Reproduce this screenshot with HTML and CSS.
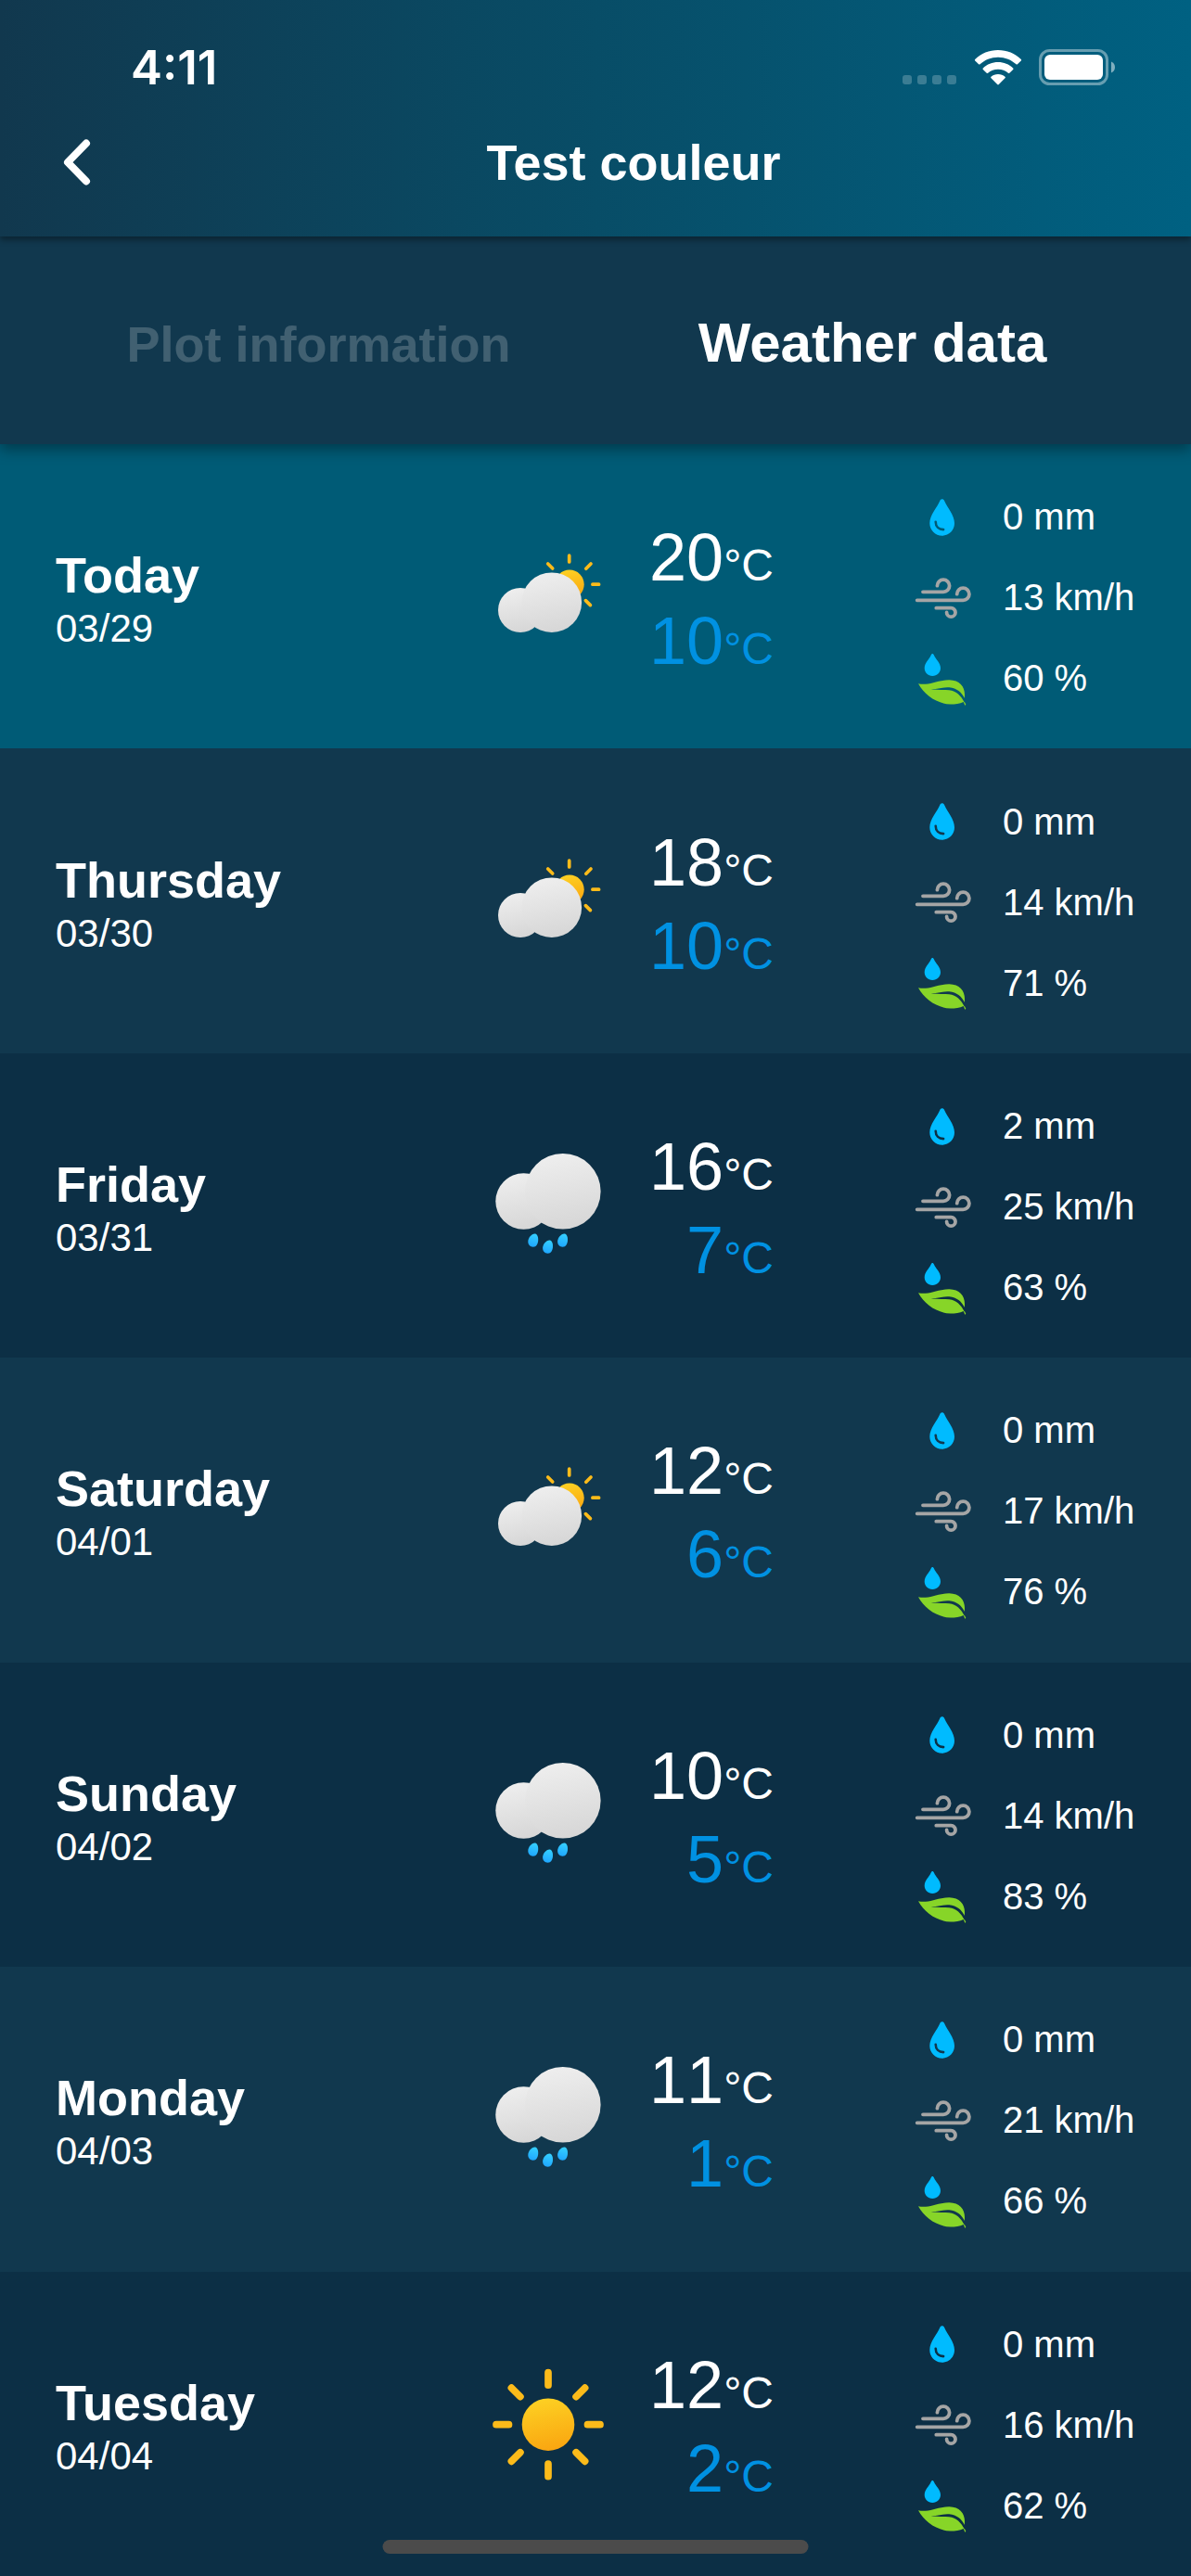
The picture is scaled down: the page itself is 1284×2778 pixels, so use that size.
FILE: index.html
```html
<!DOCTYPE html>
<html lang="en">
<head>
    <meta charset="UTF-8">
    <meta name="viewport" content="width=device-width, initial-scale=1.0">
    <title>Test couleur</title>
    <link rel="stylesheet" href="styles.css">
</head>
<body>
    <!-- Shared icons -->
    <svg class="sprite" aria-hidden="true">
        <defs>
            <linearGradient id="cloud-fill" x1="0.4" y1="0" x2="0.6" y2="1">
                <stop offset="0" stop-color="#eeeeee"/>
                <stop offset="1" stop-color="#d6d6d6"/>
            </linearGradient>
            <linearGradient id="sun-fill" x1="0.4" y1="0" x2="0.6" y2="1">
                <stop offset="0" stop-color="#fdd023"/>
                <stop offset="1" stop-color="#faa510"/>
            </linearGradient>
            <linearGradient id="rain-fill" x1="0.6" y1="0" x2="0.4" y2="1">
                <stop offset="0" stop-color="#35d0ff"/>
                <stop offset="1" stop-color="#1fa6ff"/>
            </linearGradient>
        </defs>
        <symbol id="partly-cloudy" viewBox="0 0 120 120">
            <circle cx="84" cy="47.3" r="15.7" fill="url(#sun-fill)"/>
            <g stroke="#fcbb1a" stroke-width="3.7" stroke-linecap="round">
                <path d="M83.7 16.2v6.7M60.7 25l5 5M107 25l-5.2 5.2M108.9 47.2h6.7M101.4 64.6l5 5"/>
            </g>
            <circle cx="31" cy="75" r="24" fill="url(#cloud-fill)"/>
            <circle cx="64.8" cy="66.7" r="32.3" fill="url(#cloud-fill)"/>
        </symbol>
        <symbol id="rain" viewBox="0 0 120 120">
            <circle cx="34.5" cy="55.5" r="30.2" fill="url(#cloud-fill)"/>
            <circle cx="76.8" cy="44.8" r="40.8" fill="url(#cloud-fill)"/>
            <g fill="url(#rain-fill)">
                <path d="M46.5 90.5c2.3 0 3.7 2.7 3.7 6.2 0 4.7-2 8-5.5 8-3.2 0-5.4-2.3-5.4-5.7 0-4 3.7-8.5 7.2-8.5z"/>
                <path d="M62.3 97.5c2.3 0 3.7 2.7 3.7 6.2 0 4.7-2 8-5.5 8-3.2 0-5.4-2.3-5.4-5.7 0-4 3.7-8.5 7.2-8.5z"/>
                <path d="M78.3 90.5c2.3 0 3.7 2.7 3.7 6.2 0 4.7-2 8-5.5 8-3.2 0-5.4-2.3-5.4-5.7 0-4 3.7-8.5 7.2-8.5z"/>
            </g>
        </symbol>
        <symbol id="sunny" viewBox="0 0 120 120">
            <circle cx="61" cy="60.7" r="28.3" fill="url(#sun-fill)"/>
            <path d="M61 4.700v13.500M61 103.200v13.500M5 60.700h13.500M103.500 60.700H117M21.400 21.100l9.500 9.500M91.100 90.800l9.500 9.500M100.600 21.100l-9.500 9.500M30.900 90.800l-9.500 9.500" stroke="#fcbb1a" stroke-width="7.7" stroke-linecap="round"/>
        </symbol>
        <symbol id="drop" viewBox="0 0 60 60">
            <path d="M29.700 10.300c1.300 0 2 .8 2.600 2.200C35 19 43 27.500 43 36.300c0 7.600-6 13.400-13.300 13.400s-13.400-5.800-13.400-13.400c0-8.800 8.200-17.300 10.800-23.800.6-1.400 1.300-2.200 2.600-2.200z" fill="#00bbff"/>
            <path d="M22.700 34.800c0 5 3.500 8.300 8.400 8.300" fill="none" stroke="var(--row-bg)" stroke-width="2.6" stroke-linecap="round"/>
        </symbol>
        <symbol id="wind" viewBox="0 0 60 60">
            <path d="M9 23.300h22a6.600 6.600 0 1 0-6.600-6.600M2.700 32.300h49.600a6.600 6.600 0 1 0-6.600-6.600M23.300 40.700h16a4.700 4.700 0 1 1-4.700 4.700" fill="none" stroke="#a5a5a5" stroke-width="3.8" stroke-linecap="round"/>
        </symbol>
        <symbol id="humidity" viewBox="0 0 60 60">
            <path d="M19.300 3c.7 0 1.200.6 1.600 1.600C22.700 9 28 13 28 18.500c0 4.800-3.800 8.500-8.700 8.500s-8.600-3.700-8.600-8.500c0-5.500 5.200-9.500 7-13.900.4-1 .9-1.600 1.600-1.600z" fill="#00bbff"/>
            <path d="M4 35.300c11 2.500 20-4 33.300-4 12.500.3 18 8.700 16.500 19.400l-2 1.300c1.500 2 3.300 4.500 3.500 6l-1 .7-1.600-3.700c-4 1.900-9 2.500-14 2.500C24 57 10.500 47.500 4 35.300z" fill="#87d528"/>
            <path d="M16.300 40.800c7.500.9 13.700-2.100 21-1.500 8.500.8 13.200 5.400 16.500 11.400l.2 5c-4.300-7.500-8.500-12.400-16.700-13.400-7.200-.8-13.700.4-21-1.500z" fill="var(--row-bg)"/>
        </symbol>
    </svg>

    <header class="header">
        <div class="status-bar">
            <span class="time">4:11</span>
            <svg class="signal" viewBox="0 0 58 40" aria-hidden="true">
                <rect x="0" y="28" width="10" height="10" rx="3"/>
                <rect x="16" y="28" width="10" height="10" rx="3"/>
                <rect x="32" y="28" width="10" height="10" rx="3"/>
                <rect x="48" y="28" width="10" height="10" rx="3"/>
            </svg>
            <svg class="wifi" viewBox="0 0 52 40" aria-hidden="true">
                <path d="M26 1c9.600 0 18.300 3.700 24.800 9.900.5.500.5 1 0 1.500l-3.900 3.900c-.4.400-.9.400-1.400 0C40.400 11.500 33.500 8.700 26 8.700S11.600 11.500 6.500 16.300c-.5.400-1 .4-1.400 0l-3.900-3.900c-.5-.5-.5-1 0-1.500C7.700 4.700 16.400 1 26 1z"/>
                <path d="M26 14c6.200 0 11.900 2.400 16.200 6.400.5.500.5 1 0 1.500l-3.900 3.900c-.4.400-.9.400-1.400 0C34 23.200 30.200 21.700 26 21.700s-8 1.500-10.900 4.100c-.5.400-1 .4-1.400 0l-3.900-3.900c-.5-.5-.5-1 0-1.500 4.300-4 10-6.400 16.200-6.400z"/>
                <path d="M26 27c2.900 0 5.500 1 7.500 2.800.5.400.5 1 0 1.500l-6.700 6.700c-.5.500-1.100.5-1.600 0l-6.700-6.700c-.5-.5-.5-1.100 0-1.500C20.500 28 23.100 27 26 27z"/>
            </svg>
            <svg class="battery" viewBox="0 0 82 40" aria-hidden="true">
                <rect x="1.5" y="1.5" width="72" height="36" rx="10" fill="none" stroke="#fff" stroke-width="3" opacity=".4"/>
                <rect x="6" y="6" width="63" height="27" rx="6"/>
                <path d="M78 13.500c2.500 1 4 3.300 4 6s-1.500 5-4 6z" opacity=".5"/>
            </svg>
        </div>
        <div class="nav">
            <button class="back" type="button" aria-label="Back">
                <svg viewBox="0 0 30 50" aria-hidden="true">
                    <path d="M25.500 4.500L5.500 25l20 20.500" fill="none" stroke="#fff" stroke-width="8" stroke-linecap="round" stroke-linejoin="round"/>
                </svg>
            </button>
            <h1>Test couleur</h1>
        </div>
    </header>

    <nav class="tabs">
        <button class="tab" type="button">Plot information</button>
        <button class="tab active" type="button">Weather data</button>
    </nav>

    <ul class="forecast" id="forecast"></ul>

    <div class="home-indicator"></div>

    <script>
        const days = [
            { name: 'Today', date: '03/29', icon: 'partly-cloudy', max: 20, min: 10, rain: 0, wind: 13, humidity: 60 },
            { name: 'Thursday', date: '03/30', icon: 'partly-cloudy', max: 18, min: 10, rain: 0, wind: 14, humidity: 71 },
            { name: 'Friday', date: '03/31', icon: 'rain', max: 16, min: 7, rain: 2, wind: 25, humidity: 63 },
            { name: 'Saturday', date: '04/01', icon: 'partly-cloudy', max: 12, min: 6, rain: 0, wind: 17, humidity: 76 },
            { name: 'Sunday', date: '04/02', icon: 'rain', max: 10, min: 5, rain: 0, wind: 14, humidity: 83 },
            { name: 'Monday', date: '04/03', icon: 'rain', max: 11, min: 1, rain: 0, wind: 21, humidity: 66 },
            { name: 'Tuesday', date: '04/04', icon: 'sunny', max: 12, min: 2, rain: 0, wind: 16, humidity: 62 }
        ];

        const forecast = document.getElementById('forecast');

        days.forEach(day => {
            const row = document.createElement('li');
            row.className = 'day';
            row.innerHTML = `
                <div class="day-label">
                    <h2>${day.name}</h2>
                    <p>${day.date}</p>
                </div>
                <svg class="weather-icon" aria-hidden="true"><use href="#${day.icon}"/></svg>
                <div class="temps">
                    <p class="max">${day.max}<span>°C</span></p>
                    <p class="min">${day.min}<span>°C</span></p>
                </div>
                <div class="details">
                    <p><svg aria-hidden="true"><use href="#drop"/></svg>${day.rain} mm</p>
                    <p><svg aria-hidden="true"><use href="#wind"/></svg>${day.wind} km/h</p>
                    <p><svg aria-hidden="true"><use href="#humidity"/></svg>${day.humidity} %</p>
                </div>
            `;
            forecast.appendChild(row);
        });
    </script>
</body>
</html>
```

FILE: styles.css
```css
* {
    box-sizing: border-box;
}
body {
    display: flex;
    flex-direction: column;
    min-height: 100vh;
    margin: 0;
    background: #0c2f45;
    color: white;
    font-family: "Liberation Sans", Arial, sans-serif;
}
h1, h2, p {
    margin: 0;
}
button {
    padding: 0;
    border: 0;
    background: none;
    color: inherit;
    font-family: inherit;
    cursor: pointer;
}
svg {
    display: block;
    flex: none;
    overflow: visible;
}
symbol {
    overflow: visible;
}
.sprite {
    position: absolute;
    width: 0;
    height: 0;
}

/* Header */
.header {
    position: relative;
    z-index: 2;
    background: linear-gradient(90deg, #11384e, #084d67 50%, #006182);
    box-shadow: 0 4px 6px rgba(0, 0, 0, 0.35);
}
.status-bar {
    display: flex;
    align-items: center;
    height: 96px;
    padding: 50px 82px 0 141px;
    fill: white;
}
.time {
    margin-right: auto;
    font-family: Inter, sans-serif;
    font-size: 51px;
    font-weight: 600;
    line-height: 46px;
}
.signal {
    width: 58px;
    height: 40px;
    margin-right: 19px;
    opacity: 0.22;
}
.wifi {
    width: 52px;
    height: 40px;
    margin-right: 18px;
}
.battery {
    width: 82px;
    height: 40px;
}
.nav {
    display: flex;
    align-items: center;
    height: 159px;
    padding: 0 16px 2px 67px;
}
.back svg {
    width: 31px;
    height: 50px;
}
.nav h1 {
    flex: 1;
    font-size: 54px;
    line-height: 60px;
    text-align: center;
}

/* Tabs */
.tabs {
    position: relative;
    z-index: 1;
    display: flex;
    align-items: baseline;
    padding: 75px 45px 68px;
    background: #11384e;
    box-shadow: 0 6px 14px rgba(0, 0, 0, 0.35);
}
.tab {
    flex: 1 1 0;
    font-size: 54px;
    font-weight: bold;
    line-height: 80px;
    opacity: 0.2;
}
.tab.active {
    font-size: 60px;
    opacity: 1;
}

/* Forecast */
.forecast {
    flex: 1;
    display: grid;
    grid-auto-rows: 1fr;
    margin: 0;
    padding: 0;
    list-style: none;
}
.day {
    --row-bg: #11384e;
    display: grid;
    grid-template-columns: 1fr 120px 184px 390px;
    align-items: center;
    padding: 30px 60px;
    background: var(--row-bg);
}
.day:nth-child(odd) {
    --row-bg: #0c2f45;
}
.day:first-child {
    --row-bg: #005b76;
}
.day-label {
    padding-top: 6px;
}
.day-label h2 {
    font-size: 54px;
    line-height: 60px;
}
.day-label p {
    margin-top: 4px;
    font-size: 42px;
    line-height: 48px;
}
.weather-icon {
    width: 120px;
    height: 120px;
}
.temps {
    padding-top: 6px;
    font-size: 72px;
    font-kerning: none;
    line-height: 90px;
    text-align: right;
}
.temps span {
    font-size: 48px;
    line-height: 1;
}
.temps .min {
    color: #0091e2;
}
.details {
    justify-self: end;
    width: 238px;
    padding-top: 3px;
    font-size: 40px;
    line-height: 87px;
    white-space: nowrap;
}
.details p {
    display: flex;
    align-items: center;
    gap: 35px;
}
.details svg {
    width: 60px;
    height: 60px;
}

.home-indicator {
    position: fixed;
    z-index: 3;
    bottom: 24px;
    left: 50%;
    width: 459px;
    height: 15px;
    border-radius: 8px;
    background: #4b4b4b;
    transform: translateX(-50%);
}
```
